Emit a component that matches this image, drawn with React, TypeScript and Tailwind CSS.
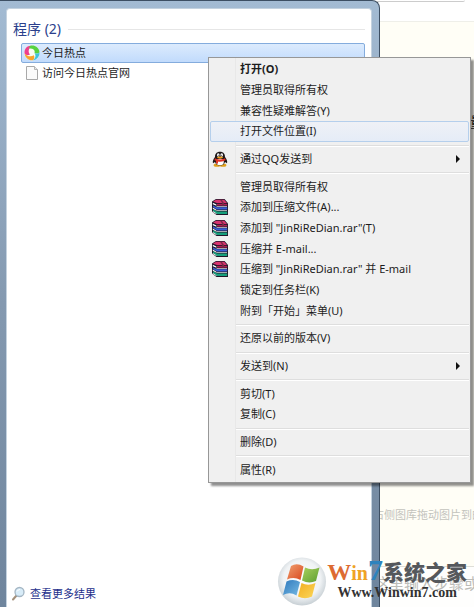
import React from "react";

type Entry = { label: string; icon?: "qq" | "rar"; bold?: boolean; hot?: boolean; sub?: boolean };

const groups: Entry[][] = [
  [
    { label: "打开(O)", bold: true },
    { label: "管理员取得所有权" },
    { label: "兼容性疑难解答(Y)" },
    { label: "打开文件位置(I)", hot: true },
  ],
  [{ label: "通过QQ发送到", icon: "qq", sub: true }],
  [
    { label: "管理员取得所有权" },
    { label: "添加到压缩文件(A)...", icon: "rar" },
    { label: '添加到 "JinRiReDian.rar"(T)', icon: "rar" },
    { label: "压缩并 E-mail...", icon: "rar" },
    { label: '压缩到 "JinRiReDian.rar" 并 E-mail', icon: "rar" },
    { label: "锁定到任务栏(K)" },
    { label: "附到「开始」菜单(U)" },
  ],
  [{ label: "还原以前的版本(V)" }],
  [{ label: "发送到(N)", sub: true }],
  [{ label: "剪切(T)" }, { label: "复制(C)" }],
  [{ label: "删除(D)" }],
  [{ label: "属性(R)" }],
];

function QQIcon() {
  return (
    <svg viewBox="0 0 16 16" className="size-4" aria-hidden="true">
      <ellipse cx="5" cy="14.2" rx="3.4" ry="1.6" fill="#e0a01c" />
      <ellipse cx="11" cy="14.2" rx="3.4" ry="1.6" fill="#e0a01c" />
      <path d="M8 .8C4.600 .8 3 3 3 6C1.400 8 .3 10.300 1 12.200L3 11C3.700 13.500 5.500 14.500 8 14.500S12.300 13.500 13 11L15 12.200C15.700 10.300 14.600 8 13 6C13 3 11.400 .8 8 .8Z" fill="#1d1718" />
      <ellipse cx="8" cy="11" rx="3.800" ry="3.200" fill="#fff" />
      <ellipse cx="6.300" cy="4" rx="1.300" ry="1.700" fill="#fff" />
      <ellipse cx="9.700" cy="4" rx="1.300" ry="1.700" fill="#fff" />
      <circle cx="6.800" cy="4.200" r=".5" fill="#111" />
      <circle cx="9.300" cy="4.200" r=".5" fill="#111" />
      <ellipse cx="8" cy="6.400" rx="3" ry="1" fill="#f2a21c" />
      <path d="M2.800 7.200Q8 10 13.200 7.200L13.500 9.200Q8 11.600 6 10.400V12.700L4 12.200V9.800L2.500 9.200Z" fill="#e03428" />
    </svg>
  );
}

function RarIcon() {
  return (
    <svg viewBox="0 0 16 16" className="size-4" aria-hidden="true">
      <path d="M0 2.500L4 0H12.500L16 4V16H4.500L0 12.500Z" fill="#20182a" />
      <path d="M1 2.600L4.200 .8H12.200L15 4H4.800Z" fill="#d6336f" />
      <path d="M5 4.800H15.200V6.500H5Z" fill="#b01c52" />
      <path d="M4.500 7H15V7.700H4.500Z" fill="#e9dfe6" />
      <path d="M1 6.400L5 8.300H15.200V10.600H5L1 8Z" fill="#3a5fd6" />
      <path d="M4.500 11H15V11.700H4.500Z" fill="#dfe9ea" />
      <path d="M1 10.300L5 12.400H15.200V15H5L1 12Z" fill="#16a07c" />
      <path d="M.8 3.700L4.400 5.400V6.800L.8 5.200ZM.8 8.600L4.400 10.800V11.700L.8 9.700ZM.8 12L4.400 14.300V15L.8 12.900Z" fill="#fff" />
      <path d="M8 .8H9.800L12 4V6.500H10.200V4Z" fill="#7a2b46" />
    </svg>
  );
}

function SwirlIcon() {
  return (
    <svg viewBox="0 0 16 16" className="size-4" aria-hidden="true">
      <circle cx="8" cy="8" r="7.600" fill="#f7fdf4" />
      <path d="M7.500 .8C3 .5 0 4 .6 8.500C2 10.500 4 10.600 6 9.500C3.800 7 4.500 3.500 7.500 .8Z" fill="#ee3f8c" />
      <path d="M.6 8.500C1 12.500 4.500 15.800 9 15.300C10.500 14 10.800 12 9.800 10.300C7 12.200 3.500 11.500 .6 8.500Z" fill="#f8a32c" />
      <path d="M6 1C10 -.5 15 2.300 15.500 7C14.500 8.800 12.500 9 10.500 8C11.300 5 9.500 3 5 3.500Z" fill="#56d23f" />
      <path d="M15.500 7C16 11 13 15 9 15.300C11.500 13.500 12.300 10.500 10.500 8C12.500 9 14.500 8.800 15.500 7Z" fill="#3ec3dc" />
    </svg>
  );
}

function FileIcon() {
  return (
    <svg viewBox="0 0 16 16" className="size-4" aria-hidden="true">
      <path d="M2.500 1.500H10.500L13.500 4.500V14.500H2.500Z" fill="#fbfbfb" stroke="#a9a9a9" />
      <path d="M10.500 1.500V4.500H13.500" fill="#e8e8e8" stroke="#b5b5b5" />
    </svg>
  );
}

function SearchIcon() {
  return (
    <svg viewBox="0 0 16 16" className="size-4" aria-hidden="true">
      <path d="M5.500 9.500L2 13.500" stroke="#a4917c" strokeWidth="2" strokeLinecap="round" />
      <circle cx="8.500" cy="6" r="4.500" fill="#d8ecf8" stroke="#a4b6c4" strokeWidth="1.300" />
      <path d="M6 5.500Q7 3.500 9 3.500" stroke="#fff" fill="none" />
    </svg>
  );
}

function WindowsOrb() {
  return (
    <svg viewBox="0 0 50 50" className="size-[50px] shrink-0" aria-hidden="true">
      <defs>
        <radialGradient id="orb" cx=".5" cy=".45" r=".55">
          <stop offset="0" stopColor="#fff" />
          <stop offset=".7" stopColor="#f0f3f5" />
          <stop offset="1" stopColor="#c7cfd4" />
        </radialGradient>
        <linearGradient id="red" x2="1" y2="1"><stop stopColor="#f0a070" /><stop offset="1" stopColor="#d9481d" /></linearGradient>
        <linearGradient id="green" x2="1" y2="1"><stop stopColor="#a9d05d" /><stop offset="1" stopColor="#5d9f30" /></linearGradient>
        <linearGradient id="blue" x2="1" y2="1"><stop stopColor="#2f79bd" /><stop offset="1" stopColor="#75b9e3" /></linearGradient>
        <linearGradient id="yellow" x2="1" y2="1"><stop stopColor="#f3ae1f" /><stop offset="1" stopColor="#fbd75b" /></linearGradient>
      </defs>
      <circle cx="25" cy="24.500" r="24" fill="url(#orb)" />
      <path d="M14 9Q20 5.500 26.500 9.500L23.500 23Q17 19.500 10 22.500Z" fill="url(#red)" />
      <path d="M28 10.500Q35 14 42.500 10.500L39 24Q32 27 25 23.500Z" fill="url(#green)" />
      <path d="M9.500 24.500Q16.500 21.500 23 25L19.500 38.500Q13 34.500 6 38Z" fill="url(#blue)" />
      <path d="M24.500 26Q31 29.500 38.500 26L35 39.500Q28 43 21 39.500Z" fill="url(#yellow)" />
    </svg>
  );
}

function MenuRow({ item }: { item: Entry }) {
  return (
    <button
      type="button"
      role="menuitem"
      className={`flex min-h-0 w-full flex-1 items-center rounded-xs border text-left whitespace-nowrap ${
        item.hot ? "border-[#b5cfec] bg-linear-to-b from-[#eff1f6] to-[#e5ecf7]" : "border-transparent"
      } ${item.bold ? "font-bold" : ""}`}
    >
      <span className="flex w-[29px] shrink-0 pl-px">
        {item.icon === "qq" && <QQIcon />}
        {item.icon === "rar" && <RarIcon />}
      </span>
      <span className="flex-1">{item.label}</span>
      {item.sub && (
        <svg viewBox="0 0 4 8" className="mr-2 h-2 w-1" aria-hidden="true">
          <path d="M0 0L4 4L0 8Z" fill="#111" />
        </svg>
      )}
    </button>
  );
}

export default function App() {
  return (
    <div className="relative flex h-screen flex-col overflow-hidden bg-[#fffef6] font-['Noto_Sans','Noto_Sans_CJK_SC',sans-serif] text-[11px] leading-4 text-[#1c1c1c]">
      <div className="h-[22px] shrink-0 border-b border-[#efefe9] bg-white pr-[9px]">
        <div className="h-0.5 rounded-b border-b border-[#cccccc]" />
      </div>
      <div className="flex flex-1 flex-col text-[#c3c3bd]">
        <p className="mt-[90px] ml-[470px] text-sm leading-5 whitespace-nowrap text-[#222]">量</p>
        <p className="mt-auto mb-[43px] ml-[373px] whitespace-nowrap">右侧图库拖动图片到的</p>
        <div className="h-[41px] border-t border-[#deded8] bg-[#fefefd] pt-1">
          <p className="ml-[374px] text-[15px] leading-6 whitespace-nowrap text-[#bcbcb8]">这里输入步骤或</p>
        </div>
      </div>

      <main className="absolute inset-y-0 left-0 flex w-[380px] rounded-tr-lg border-t border-r border-[#3d4f63] bg-linear-to-b from-[#a3bbd3] via-[#8499b0] to-[#6f859d] pt-[7px] pr-[7px] pl-[6px]">
        <section className="flex flex-1 flex-col rounded-t border border-b-0 border-[#c4d2df] bg-white pt-2.5 pr-1.5">
          <div className="flex items-center gap-[7px] pl-1.5">
            <h1 className="text-sm leading-5 text-[#2b3f8c]">程序 (2)</h1>
            <div className="flex-1 border-t border-[#e6e6e6]" />
          </div>
          <ul className="mt-1 pl-3.5">
            <li>
              <button type="button" className="flex h-5 w-full items-center gap-0.5 rounded-xs border border-[#84acdd] bg-linear-to-b from-[#dcebfd] to-[#c1dbfc] pl-0.5">
                <SwirlIcon />
                今日热点
              </button>
            </li>
            <li>
              <button type="button" className="flex h-[19px] w-full items-center gap-0.5 pl-[3px]">
                <FileIcon />
                访问今日热点官网
              </button>
            </li>
          </ul>
          <a href="#results" className="mt-auto mb-[5px] flex items-center gap-[3px] pl-1 text-[#1d2f8c]">
            <SearchIcon />
            查看更多结果
          </a>
        </section>
      </main>

      <div
        role="menu"
        className="absolute top-[57px] left-[208px] flex h-[426px] w-[263px] flex-col border border-[#979797] bg-[#f0f0f0] bg-linear-to-r from-[#f0f0f0] from-[26px] via-[#e0e0e0] via-[26px] to-[#f0f0f0] to-[27px] px-px pt-px pb-0.5 shadow-[3px_3px_2px_#00000070]"
      >
        {groups.map((group, g) => (
          <React.Fragment key={g}>
            {g > 0 && <div role="separator" className="mt-[3px] mb-0.5 ml-[26px] h-0.5 shrink-0 border-t border-b border-t-[#dedede] border-b-white" />}
            {group.map((item, i) => (
              <MenuRow key={i} item={item} />
            ))}
          </React.Fragment>
        ))}
      </div>

      <div className="absolute right-[7px] bottom-0 flex items-center font-['Liberation_Serif','Noto_Sans_CJK_SC',serif] font-bold whitespace-nowrap">
        <WindowsOrb />
        <div className="flex flex-col items-center pb-2">
          <div className="flex items-baseline text-[21px] leading-7 text-[#55585c]">
            <span className="text-2xl leading-7 text-[#dd6b32]">W</span>
            <span className="text-xl leading-7 text-[#efa325]">in</span>
            <span className="text-[30px] text-[#2e83bd]">7</span>
            <span className="font-['Noto_Sans_CJK_SC',sans-serif] font-black">系统之家</span>
          </div>
          <div className="text-sm leading-3 text-[#333]">Www.Winwin7.com</div>
        </div>
      </div>
    </div>
  );
}
